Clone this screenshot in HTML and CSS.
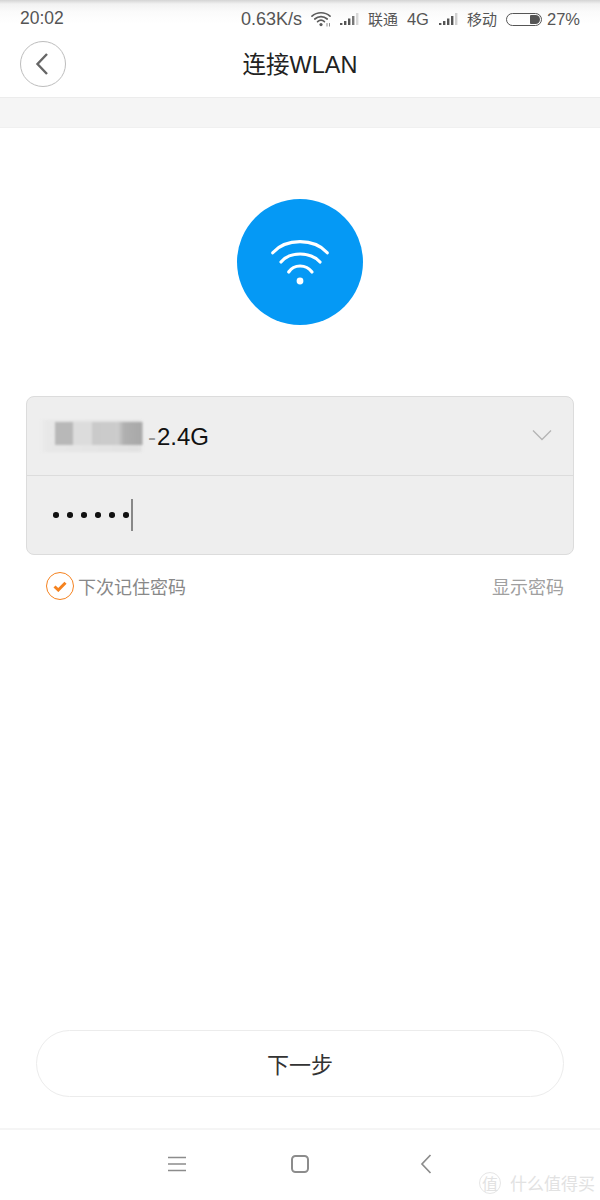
FILE: index.html
```html
<!DOCTYPE html>
<html lang="zh-CN">
<head>
    <meta charset="UTF-8">
    <meta name="viewport" content="width=device-width, initial-scale=1.0">
    <title>连接WLAN</title>
    <link rel="stylesheet" href="styles.css">
</head>
<body>
    <div class="page">
        <div class="status-bar">
            <span class="time">20:02</span>
            <div class="status-right">
                <span class="speed">0.63K/s</span>
                <svg class="wifi-small" width="21" height="16" viewBox="0 0 21 16" fill="none" stroke="#5c5c5c" stroke-width="1.7" stroke-linecap="round">
                    <path d="M1 5.2C6 .6 14 .6 19 5.2"/>
                    <path d="M3.8 8C7.4 4.8 12.6 4.8 16.2 8"/>
                    <path d="M6.6 10.6C8.6 9 11.4 9 13.4 10.6"/>
                    <circle cx="10" cy="13.6" r="1.6" fill="#5c5c5c" stroke="none"/>
                    <path d="M16 12.5v2.6M18.5 12.5v2.6" stroke-width="1" stroke="#8a8a8a"/>
                </svg>
                <svg class="signal" width="19" height="14" viewBox="0 0 19 14">
                    <rect x="0" y="11" width="2.4" height="2" fill="#555"/>
                    <rect x="4" y="9" width="2.4" height="4" fill="#555"/>
                    <rect x="8" y="6.5" width="2.4" height="6.5" fill="#555"/>
                    <rect x="12" y="4" width="2.4" height="9" fill="#777"/>
                    <rect x="16" y="1" width="2.4" height="12" fill="#d8d8d8"/>
                </svg>
                <span class="carrier">联通</span>
                <span class="net">4G</span>
                <svg class="signal signal-mobile" width="19" height="14" viewBox="0 0 19 14">
                    <rect x="0" y="11" width="2.4" height="2" fill="#555"/>
                    <rect x="4" y="9" width="2.4" height="4" fill="#555"/>
                    <rect x="8" y="6.5" width="2.4" height="6.5" fill="#555"/>
                    <rect x="12" y="4" width="2.4" height="9" fill="#555"/>
                    <rect x="16" y="1" width="2.4" height="12" fill="#d0d0d0"/>
                </svg>
                <span class="carrier">移动</span>
                <div class="battery"><div class="battery-level"></div></div>
                <span class="percent">27%</span>
            </div>
        </div>

        <div class="header">
            <div class="back-btn">
                <svg width="14" height="24" viewBox="0 0 14 24" fill="none" stroke="#666" stroke-width="2.4">
                    <path d="M12 2L2.5 12L12 22"/>
                </svg>
            </div>
            <h1 class="title">连接WLAN</h1>
        </div>
        <div class="band"></div>

        <div class="content">
            <div class="wifi-circle">
                <svg width="60" height="50" viewBox="0 0 60 50" fill="none" stroke="#fff" stroke-width="3.2" stroke-linecap="round">
                    <path d="M2.700 16.700C16 2 44 2 57.300 16.700"/>
                    <path d="M11 26C20 15.300 40 15.300 50 26"/>
                    <path d="M18.700 36C24 28 36 28 42 36"/>
                    <circle cx="30" cy="45" r="3.400" fill="#fff" stroke="none"/>
                </svg>
            </div>

            <div class="form-box">
                <div class="form-row">
                    <div class="ssid-blur"></div>
                    <span class="ssid-dash">-</span>
                    <span class="ssid">2.4G</span>
                    <svg class="chevron" width="20" height="12" viewBox="0 0 20 12" fill="none" stroke="#b4b4b4" stroke-width="1.300">
                        <path d="M1 1.500L10 10.500L19 1.500"/>
                    </svg>
                </div>
                <div class="form-row form-row-last">
                    <div class="dots">
                        <i></i><i></i><i></i><i></i><i></i><i></i>
                    </div>
                    <div class="caret"></div>
                </div>
            </div>

            <div class="options">
                <div class="remember">
                    <div class="check">
                        <svg width="14" height="11" viewBox="0 0 14 11" fill="none" stroke="#f5821f" stroke-width="3">
                            <path d="M1.500 5.500L5.300 9L12.500 1.800"/>
                        </svg>
                    </div>
                    <span>下次记住密码</span>
                </div>
                <span class="show-pwd">显示密码</span>
            </div>

            <div class="next-btn">下一步</div>
        </div>

        <div class="nav-bar">
            <svg class="nav-menu" width="18" height="16" viewBox="0 0 18 16" stroke="#8c8c8c" stroke-width="1.600">
                <path d="M0 1.500H18M0 8H18M0 14.500H18"/>
            </svg>
            <svg width="18" height="18" viewBox="0 0 18 18" fill="none" stroke="#8c8c8c" stroke-width="2">
                <rect x="1" y="1" width="16" height="16" rx="3.500"/>
            </svg>
            <svg class="nav-back" width="12" height="20" viewBox="0 0 12 20" fill="none" stroke="#8c8c8c" stroke-width="1.700">
                <path d="M10.500 1L2 10L10.500 19"/>
            </svg>
            <div class="watermark">
                <span class="wm-badge">值</span>
                <span>什么值得买</span>
            </div>
        </div>
    </div>
</body>
</html>
```

FILE: styles.css
```css
* {
    box-sizing: border-box;
}
body {
    margin: 0;
    background-color: white;
    font-family: "Liberation Sans", "Noto Sans CJK SC", sans-serif;
}
.page {
    width: 600px;
    height: 1200px;
    display: flex;
    flex-direction: column;
    overflow: hidden;
}

/* status bar */
.status-bar {
    height: 32px;
    padding: 6px 20px 0;
    display: flex;
    align-items: center;
    justify-content: space-between;
    color: #555;
    font-size: 18px;
    line-height: 1;
    background: linear-gradient(#d4d4d4 0, #f2f2f2 4px, #fbfbfb 12px, white 24px);
}
.time {
    font-size: 17.500px;
}
.status-right {
    display: flex;
    align-items: center;
}
.wifi-small {
    margin-left: 9px;
}
.signal {
    margin-left: 8px;
}
.signal-mobile {
    margin-left: 10px;
}
.carrier {
    margin-left: 9px;
    font-size: 15px;
}
.net {
    margin-left: 9px;
    font-size: 16.500px;
}
.battery {
    width: 36px;
    height: 13px;
    margin-left: 9px;
    padding: 1px;
    border: 1px solid #555;
    border-radius: 7px;
    display: flex;
    justify-content: flex-end;
}
.battery-level {
    width: 10px;
    background-color: #555;
    border-radius: 1px 5px 5px 1px;
}
.percent {
    margin-left: 5px;
    font-size: 16.500px;
}

/* header */
.header {
    height: 65px;
    padding-left: 20px;
    padding-bottom: 2px;
    display: flex;
    align-items: center;
}
.back-btn {
    width: 46px;
    height: 46px;
    border: 1px solid #bdbdbd;
    border-radius: 50%;
    display: flex;
    align-items: center;
    justify-content: center;
    padding-right: 2px;
}
.title {
    flex: 1;
    margin: 0 0 2px;
    padding-right: 66px;
    text-align: center;
    font-size: 23.500px;
    font-weight: normal;
    color: #222;
}
.band {
    height: 31px;
    background-color: #f5f5f5;
    border-top: 1px solid #ececec;
    border-bottom: 1px solid #f0f0f0;
}

/* main */
.content {
    flex: 1;
    padding: 71px 26px 31px;
    display: flex;
    flex-direction: column;
}
.wifi-circle {
    width: 126px;
    height: 126px;
    margin: 0 auto 71px;
    border-radius: 50%;
    background-color: #0599f5;
    display: flex;
    align-items: center;
    justify-content: center;
    padding-bottom: 2px;
}
.form-box {
    height: 159px;
    background-color: #eeeeee;
    border: 1px solid #dcdcdc;
    border-radius: 8px;
}
.form-row {
    height: 79px;
    padding: 0 21px 0 13px;
    display: flex;
    align-items: center;
    border-bottom: 1px solid #dcdcdc;
}
.form-row-last {
    height: 78px;
    border-bottom: 0;
}
.ssid-blur {
    width: 107px;
    height: 32px;
    flex-shrink: 0;
    filter: blur(1.200px);
    background:
        linear-gradient(90deg, transparent 15px, #b8b8b8 15px, #b8b8b8 33px, #dcdcdc 33px, #dcdcdc 52px, #cacaca 52px, #cccccc 78px, #b0b0b0 84px, #a8a8a8 102px, transparent 103px) 0 2px / 100% 23px no-repeat,
        linear-gradient(90deg, transparent 0, #e8e8e8 6px, #e2e2e2 100px, transparent 103px);
}
.ssid-dash {
    margin: 2px 0 0 1px;
    font-size: 24px;
    color: #999;
}
.ssid {
    margin: 2px 0 0 1px;
    font-size: 24px;
    color: #111;
}
.chevron {
    margin-left: auto;
    margin-bottom: 3px;
}
.dots {
    margin-left: 13px;
    display: flex;
    gap: 8.500px;
}
.dots i {
    width: 5.500px;
    height: 5.500px;
    border-radius: 50%;
    background-color: #111;
}
.caret {
    width: 2px;
    height: 32px;
    margin-left: 2px;
    background-color: #888;
}
.options {
    margin-top: 17px;
    padding: 0 10px 0 20px;
    display: flex;
    align-items: center;
    justify-content: space-between;
    font-size: 18px;
    color: #888;
}
.remember {
    display: flex;
    align-items: center;
    gap: 4px;
}
.check {
    width: 28px;
    height: 28px;
    border: 1.500px solid #f5821f;
    border-radius: 50%;
    display: flex;
    align-items: center;
    justify-content: center;
}
.show-pwd {
    color: #a0a0a0;
}
.next-btn {
    height: 67px;
    margin: auto 10px 0;
    padding-bottom: 2px;
    border: 1px solid #ececec;
    border-radius: 34px;
    display: flex;
    align-items: center;
    justify-content: center;
    font-size: 22px;
    color: #333;
}

/* bottom nav */
.nav-bar {
    height: 72px;
    padding: 0 168px 2px;
    display: grid;
    grid-template-columns: 1fr auto 1fr;
    align-items: center;
    border-top: 2px solid #f5f5f5;
    position: relative;
}
.nav-back {
    justify-self: end;
}
.watermark {
    position: absolute;
    right: 5px;
    bottom: 5px;
    display: flex;
    align-items: center;
    gap: 9px;
    font-size: 17px;
    color: #e2e2e2;
}
.wm-badge {
    width: 22px;
    height: 22px;
    border: 1px solid #e6e6e6;
    border-radius: 50%;
    display: flex;
    align-items: center;
    justify-content: center;
    font-size: 16px;
}
```
